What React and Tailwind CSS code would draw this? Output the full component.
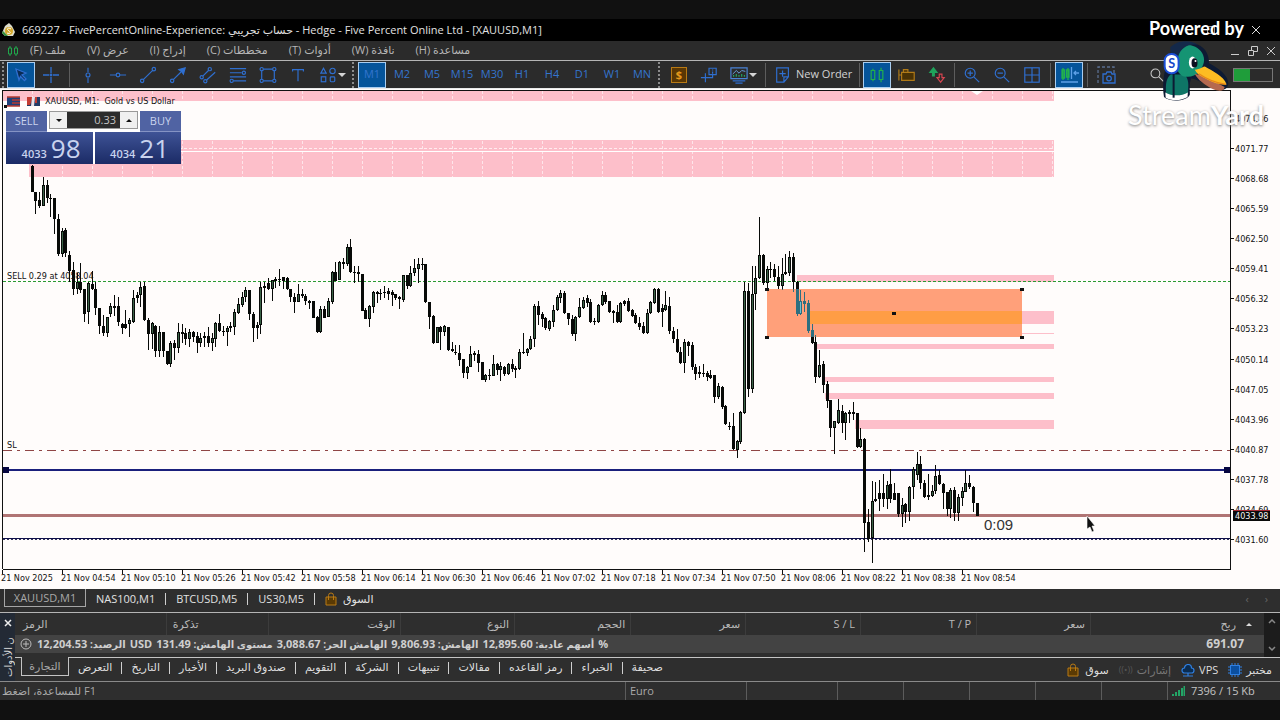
import React from "react";

// Each candle: [high, open, close, low] as vertical positions on the chart.
const CANDLES = [
  [165,166,192,192],[192,192,201,214],[192,200,206,208],[177,206,185,206],[180,185,198,203],[194,198,199,217],[198,198,219,234],[214,219,254,256],[228,254,231,257],[228,230,253,257],
  [251,255,271,282],[262,270,289,295],[273,289,282,294],[263,282,290,293],[289,289,314,322],[282,312,283,324],[271,284,289,290],[282,289,308,315],[308,308,326,334],[315,326,333,336],
  [317,333,317,337],[303,314,306,317],[295,306,308,316],[297,306,322,326],[323,324,328,334],[310,324,328,329],[318,324,320,337],[290,322,298,323],[292,298,295,303],[282,295,287,307],
  [282,286,320,321],[318,320,334,350],[322,334,323,349],[325,326,351,357],[326,351,332,357],[332,332,351,357],[351,351,364,365],[341,364,343,367],[340,343,348,360],[323,348,332,353],
  [324,332,334,343],[328,333,339,345],[329,339,332,347],[331,332,337,342],[332,336,343,353],[333,343,338,347],[332,336,338,347],[327,336,343,347],[333,343,338,351],[322,339,323,347],
  [314,323,331,332],[326,331,332,336],[326,332,328,346],[322,328,326,332],[309,327,312,335],[298,313,304,314],[292,305,297,307],[287,297,290,302],[290,290,314,320],[312,314,328,342],
  [322,328,325,339],[282,325,287,334],[282,286,288,303],[278,283,289,290],[280,289,280,301],[277,281,279,288],[269,279,280,286],[277,277,281,289],[277,278,289,290],[289,289,297,302],
  [293,297,302,313],[284,302,294,302],[289,294,296,298],[294,296,301,305],[300,301,303,309],[301,301,318,318],[316,317,332,333],[306,332,309,333],[306,309,318,318],[298,317,301,317],
  [271,302,272,304],[262,272,281,281],[261,280,262,280],[258,262,264,269],[244,264,247,266],[239,247,272,273],[266,272,273,283],[266,272,274,282],[274,274,311,311],[308,310,319,319],
  [305,319,306,327],[291,307,292,313],[291,292,294,303],[289,293,294,300],[286,292,293,298],[288,291,294,300],[290,292,295,306],[294,294,298,300],[296,297,299,309],[275,300,275,302],
  [275,275,286,289],[266,286,273,287],[259,273,268,276],[258,269,264,283],[258,264,265,270],[264,264,302,303],[302,302,317,329],[315,316,343,344],[327,343,327,343],[326,327,332,350],
  [325,332,326,336],[327,327,350,351],[342,349,351,352],[345,352,353,355],[345,353,360,366],[359,359,373,378],[366,373,367,379],[346,367,354,367],[351,353,355,361],[350,354,363,372],
  [362,362,380,380],[374,380,375,382],[369,375,376,380],[355,376,364,376],[363,364,370,375],[362,370,366,381],[366,367,374,376],[363,374,364,375],[359,364,369,372],[366,368,370,378],
  [349,369,352,370],[333,352,353,354],[348,353,349,356],[336,349,339,350],[304,339,306,347],[301,306,315,325],[312,314,319,327],[317,318,328,330],[320,329,321,331],[305,322,310,327],
  [295,310,297,311],[290,298,293,303],[291,293,313,314],[313,313,319,325],[315,319,334,336],[316,334,317,341],[298,317,307,318],[297,308,300,309],[295,298,303,307],[299,302,322,323],
  [318,321,322,325],[304,322,305,323],[291,305,295,306],[292,295,302,304],[301,301,312,313],[310,311,313,323],[305,312,322,323],[302,322,303,323],[300,304,301,306],[298,301,311,312],
  [309,310,316,317],[313,315,323,324],[317,323,327,330],[322,326,333,334],[309,333,313,334],[301,313,302,314],[288,303,289,304],[288,289,312,313],[304,308,312,327],[291,310,305,311],
  [297,306,331,334],[327,331,339,343],[329,339,352,353],[347,352,363,364],[339,363,342,373],[341,342,346,356],[342,345,367,370],[364,367,374,380],[366,372,374,378],[364,373,374,377],
  [371,373,377,381],[370,375,378,379],[375,375,397,403],[383,397,386,399],[386,387,407,409],[405,406,424,425],[422,426,427,430],[413,426,449,450],[440,450,441,458],[411,442,412,444],
  [282,413,291,414],[283,291,389,397],[266,389,294,393],[266,294,278,310],[217,278,255,279],[254,255,283,285],[266,283,269,288],[262,269,270,278],[264,269,277,281],[266,277,286,289],
  [258,286,274,290],[254,272,274,275],[251,273,257,276],[253,257,282,292],[281,282,314,316],[290,314,301,315],[292,301,304,312],[300,303,331,333],[324,330,343,344],[335,342,377,383],
  [350,377,365,378],[361,364,385,393],[381,384,401,408],[400,400,428,437],[421,428,421,454],[399,423,410,424],[405,411,423,433],[412,423,413,440],[410,412,414,423],[402,412,414,420],
  [413,413,447,448],[428,447,439,448],[438,439,523,552],[509,522,539,542],[481,538,501,563],[482,499,501,502],[480,493,499,511],[474,493,499,507],[481,499,485,509],[469,484,499,503],
  [483,493,500,500],[493,493,514,517],[498,514,505,527],[503,504,512,523],[486,512,487,521],[467,487,469,499],[452,475,464,480],[456,464,483,489],[480,483,497,498],[474,495,497,500],
  [485,496,491,497],[465,491,476,494],[470,475,484,485],[483,484,493,509],[492,492,509,516],[488,509,490,518],[487,490,513,521],[494,513,497,521],[487,498,491,506],[470,492,483,492],
  [475,483,487,489],[486,487,503,512],[503,503,516,516],
];

const PRICES = ["4074.86","4071.77","4068.68","4065.59","4062.50","4059.41","4056.32","4053.23","4050.14","4047.05","4043.96","4040.87","4037.78","4034.69","4031.60"];
const TIMES = ["21 Nov 2025","21 Nov 04:54","21 Nov 05:10","21 Nov 05:26","21 Nov 05:42","21 Nov 05:58","21 Nov 06:14","21 Nov 06:30","21 Nov 06:46","21 Nov 07:02","21 Nov 07:18","21 Nov 07:34","21 Nov 07:50","21 Nov 08:06","21 Nov 08:22","21 Nov 08:38","21 Nov 08:54"];
const ZONES = [
  [2, 91, 10], [29, 140, 37], [797, 275, 7], [810, 311, 13], [810, 333, 1],
  [817, 344, 5], [822, 377, 5], [825, 393, 6], [855, 420, 9],
];

function Candles({ wick, up }) {
  return CANDLES.map(([h, o, c, l], i) => {
    const x = Math.floor(32 + i * 3.75);
    const top = Math.min(o, c);
    const height = Math.max(1, Math.abs(c - o));
    return (
      <g key={i}>
        <rect x={x} y={h} width="1" height={Math.max(1, l - h)} fill={wick} />
        <rect x={x - 1} y={top} width="3" height={height} fill={wick} />
        {c < o && height > 3 && <rect x={x} y={top + 1} width="1" height={height - 2} fill={up} />}
      </g>
    );
  });
}

function Chart() {
  return (
    <svg viewBox="0 88 1280 501" className="block h-auto w-full bg-[#fffcfb] font-['DejaVu_Sans_Condensed','DejaVu_Sans',sans-serif]" role="img" aria-label="XAUUSD M1 candlestick chart">
      <defs>
        <clipPath id="zone"><rect x="767" y="289" width="255" height="48" /></clipPath>
        <clipPath id="bands">
          {ZONES.slice(0, 2).map(([x, y, h]) => <rect key={y} x={x} y={y} width={1054 - x} height={h} />)}
        </clipPath>
      </defs>
      <g shapeRendering="crispEdges">
        <rect x="0" y="88" width="1280" height="1" fill="#e8e8e8" />
        {ZONES.map(([x, y, h]) => <rect key={y} x={x} y={y} width={1054 - x} height={h} fill="#fdbfca" />)}
        <g clipPath="url(#bands)">
          {Array.from({ length: 35 }, (_, i) => (
            <line key={i} x1={32.5 + i * 30} x2={32.5 + i * 30} y1="91" y2="569" stroke="#fff" strokeOpacity="0.6" strokeDasharray="3 2" />
          ))}
          <line x1="29" x2="1054" y1="148.5" y2="148.5" stroke="#fff" strokeOpacity="0.7" strokeDasharray="3 2" />
          <line x1="29" x2="1054" y1="151.5" y2="151.5" stroke="#fff" />
        </g>
        <rect x="767" y="289" width="255" height="48" fill="#ffa07a" />
        <rect x="810" y="311" width="212" height="13" fill="#ff9d45" />
        <line x1="3" x2="1230" y1="281.5" y2="281.5" stroke="#2a9a32" strokeDasharray="3 2" />
        <line x1="3" x2="1230" y1="450.5" y2="450.5" stroke="#8f4545" strokeDasharray="9 5 3 5" />
        <rect x="3" y="514" width="1227" height="3" fill="#b07474" />
        <rect x="3" y="469" width="1227" height="2" fill="#1a1f7c" />
        <line x1="3" x2="1230" y1="538.5" y2="538.5" stroke="#10104a" />
        <line x1="3" x2="1230" y1="539.5" y2="539.5" stroke="#30305c" strokeDasharray="2 2" />
        <Candles wick="#080a08" up="#3a6347" />
        <g clipPath="url(#zone)"><Candles wick="#2d6f80" up="#6fc0d2" /></g>
        <rect x="3" y="467" width="6" height="6" fill="#060640" />
        <rect x="1224" y="467" width="7" height="6" fill="#060640" />
        {[[767, 289], [1022, 289], [767, 337], [1022, 337], [894, 313]].map(([x, y]) => (
          <rect key={`${x}-${y}`} x={x - 2} y={y - 1} width="4" height="3" fill="#111" />
        ))}
        <path d="M2.5 569V90.5H1230.5V569.5H2.5" fill="none" stroke="#111" />
        {PRICES.map((p, i) => <rect key={p} x="1231" y={Math.round(118 + i * 30.07)} width="3" height="1" fill="#111" />)}
        {TIMES.map((t, i) => <rect key={t} x={2 + i * 60} y="570" width="1" height="4" fill="#111" />)}
      </g>
      <path d="M971 91h12l-6 4z" fill="#fff" />
      <g fontSize="9" fill="#111">
        {PRICES.map((p, i) => <text key={p} x="1235" y={122 + i * 30.07}>{p}</text>)}
        {TIMES.map((t, i) => <text key={t} x={1 + i * 60} y="581">{t}</text>)}
        <text x="7" y="279">SELL 0.29 at 4058.04</text>
        <text x="7" y="448">SL</text>
        <text x="45" y="104">{"XAUUSD, M1:\u00a0\u00a0Gold vs US Dollar"}</text>
      </g>
      <rect x="1233" y="510" width="37" height="2" fill="#a52a35" />
      <rect x="1233" y="511" width="37" height="10" fill="#0a0a0a" />
      <text x="1235" y="519" fontSize="9" fill="#f4f4f4">4033.98</text>
      <text x="984" y="530" fontSize="15" fill="#333" className="font-['Liberation_Sans',sans-serif]">0:09</text>
      <g>
        <rect x="7" y="97" width="13" height="9" fill="#1f3f78" />
        <path d="M7 97h13M12 100h8M12 103h8M7 106h13" stroke="#b53a32" strokeWidth="1.5" />
        <rect x="27" y="97" width="13" height="9" fill="#233a66" />
        <path d="M27 97h5v3l-2 5h-3zM35 97h2v6h-2z" fill="#c43c32" />
        <path d="M32 97h3l-1 9h-3z" fill="#e7e2ea" />
        <rect x="4" y="105" width="3" height="3" fill="#111" />
      </g>
      <path d="M1087 516v13l3-2 2 5 2-1-2-5h3z" fill="#111" stroke="#fff" strokeWidth="0.6" />
    </svg>
  );
}

function TradePanel() {
  return (
    <div className="absolute left-1.5 top-[23px] w-[175px] text-[#c9d3ee]">
      <div className="flex h-[21px] bg-white">
        <button className="w-[41px] border-b border-[#8593c4] bg-[#5063a3] text-[11px] leading-5">SELL</button>
        <div className="mx-0.5 flex h-[18px] flex-1 border border-[#999] bg-[#2c2c2c]">
          <button aria-label="Decrease volume" className="flex w-[17px] items-center justify-center bg-[#f0f0f0]">
            <svg viewBox="0 0 6 3" className="h-[3px] w-1.5"><path d="M0 0h6L3 3z" fill="#111" /></svg>
          </button>
          <input aria-label="Volume" defaultValue="0.33" className="w-0 flex-1 bg-transparent pr-1 text-right text-[11px] leading-4 text-[#c4c4c4] outline-none" />
          <button aria-label="Increase volume" className="flex w-[17px] items-center justify-center bg-[#f0f0f0]">
            <svg viewBox="0 0 6 3" className="h-[3px] w-1.5"><path d="M0 3h6L3 0z" fill="#111" /></svg>
          </button>
        </div>
        <button className="w-[41px] border-b border-[#8593c4] bg-[#5063a3] text-[11px] leading-5">BUY</button>
      </div>
      <div className="grid h-8 grid-cols-2 gap-0.5 bg-white">
        <button aria-label="Sell at 4033.98" className="flex items-baseline justify-end gap-1 bg-linear-to-b from-[#3f5396] to-[#1b2b66] pr-3">
          <span className="text-[11px] font-semibold">4033</span><span className="text-[26px] leading-8">98</span>
        </button>
        <button aria-label="Buy at 4034.21" className="flex items-baseline justify-end gap-1 bg-linear-to-b from-[#3f5396] to-[#1b2b66] pr-3">
          <span className="text-[11px] font-semibold">4034</span><span className="text-[26px] leading-8">21</span>
        </button>
      </div>
    </div>
  );
}

const BLUE = "#2f6fd0";

function Icon({ children, size = "size-5", stroke = BLUE }) {
  return (
    <svg viewBox="0 0 20 20" className={`${size} shrink-0`} fill="none" stroke={stroke} strokeWidth="1.3" aria-hidden="true">
      {children}
    </svg>
  );
}

const DRAW_TOOLS = [
  ["Vertical line", <><path d="M10 2v5M10 13v6" /><circle cx="10" cy="10" r="2.2" /></>],
  ["Horizontal line", <><path d="M1 10h7M12 10h7" /><circle cx="10" cy="10" r="2" /></>],
  ["Trend line", <><path d="M4.500 15.500L15.500 4.500" /><circle cx="3.500" cy="16.500" r="1.900" /><circle cx="16.500" cy="3.500" r="1.900" /></>],
  ["Arrow line", <><path d="M4.500 15.500L15 5" /><circle cx="3.500" cy="16.500" r="1.900" /><path d="M11 4l7-2-2 7-2-3z" fill={BLUE} /></>],
  ["Channel", <><path d="M4.500 11L10.500 5M8.500 15.500L18 7" /><circle cx="3" cy="12.500" r="1.800" /><circle cx="12" cy="3.500" r="1.800" /><circle cx="7" cy="17" r="1.800" /></>],
  ["Fibonacci", <><path d="M1 3h18M1 7.500h13M1 12h18M5 16.500h14" /><circle cx="16.500" cy="7.500" r="1.800" /><circle cx="3" cy="16.500" r="1.800" /></>],
  ["Rectangle", <><path d="M3 5v10M17 5v10M5 3.500h10M5 16.500h10" /><circle cx="3" cy="3.500" r="1.800" /><circle cx="17" cy="3.500" r="1.800" /><circle cx="3" cy="16.500" r="1.800" /><circle cx="17" cy="16.500" r="1.800" /></>],
  ["Text", <path d="M4 6V4h12v2M10 4v13" />],
  ["Shapes", <><path d="M5 2.500L8 8H2z" /><circle cx="15" cy="5.500" r="3" /><rect x="2.500" y="12" width="5" height="5.500" /><rect x="12.500" y="12" width="5" height="5.500" rx="1" /></>],
];

function Tool({ label, active, children }) {
  const state = active ? "border-[#a9cdf0] bg-[#05549a]" : "border-transparent";
  return (
    <button aria-label={label} className={`flex h-[26px] w-7 shrink-0 items-center justify-center border ${state}`}>
      {children}
    </button>
  );
}

const Grip = () => <span className="mx-0.5 h-[26px] shrink-0 border-l-2 border-dotted border-[#8c8c8c]" />;
const Sep = ({ wide }) => <span className={`${wide ? "mx-1" : "mx-[3px]"} h-6 w-px shrink-0 bg-[#5d5d5d]`} />;
const Caret = () => <svg viewBox="0 0 8 4" className="-ml-1 mr-1 h-1 w-2 shrink-0" aria-hidden="true"><path d="M0 0h8L4 4z" fill="#d5d5d5" /></svg>;

function Toolbar() {
  return (
    <div className="flex h-7 items-center border-t border-[#b5b5b5] bg-[#2b2b2b]" role="toolbar">
      <Grip />
      <div className="ml-px flex items-center gap-0.5">
        <Tool label="Cursor" active><Icon><path d="M5 4l10 4-4 2 4 4-1.500 1.500-4-4L8 15z" fill="#0a2c55" /></Icon></Tool>
        <Tool label="Crosshair"><Icon><path d="M10 2v6M10 12v6M2 10h6M12 10h6" /><circle cx="10" cy="10" r="0.800" /></Icon></Tool>
      </div>
      <Sep wide />
      <div className="flex items-center gap-0.5">
        {DRAW_TOOLS.map(([label, art]) => <Tool key={label} label={label}><Icon size="size-[18px]">{art}</Icon></Tool>)}
      </div>
      <Caret />
      <Grip />
      <div className="ml-0.5 flex items-center gap-0.5 text-[11px] text-[#3475cf]">
        {["M1", "M2", "M5", "M15", "M30", "H1", "H4", "D1", "W1", "MN"].map((t) => <Tool key={t} label={t} active={t === "M1"}>{t}</Tool>)}
      </div>
      <Grip />
      <div className="ml-[3px] flex items-center gap-0.5">
        <Tool label="Symbols">
          <span className="flex size-4 items-center justify-center border border-[#b97a14] bg-[#5a3704] text-[11px] font-bold leading-none text-[#e59a1c]">$</span>
        </Tool>
        <Tool label="Data window"><Icon size="size-[18px]"><path d="M6 8v10M1 13h10M10 13h4V9M10 2.500h8v7h-8zM14 4v1M14 6v2.500" /></Icon></Tool>
        <Tool label="Indicators"><Icon size="size-[18px]"><path d="M1 2h18v12H1z" stroke="#4b83d6" /><path d="M3 9l4-4 3 3 3-3 4 1" stroke="#6fa6e8" strokeWidth="1" /><path d="M4 12v-2M7 12V9M10 12v-2M13 12V9M16 12v-2" stroke="#22a565" /><path d="M3 16.500h14M6 19h8" /></Icon></Tool>
      </div>
      <Caret />
      <Sep wide />
      <button className="flex h-[26px] w-[86px] shrink-0 items-center gap-1 pl-1 text-[11px] text-[#d2d2d2]">
        <Icon size="size-[18px]"><path d="M3 2h13v10l-5 6H3zM16 12h-5v6M9.500 5v7M6 8.500h7" /></Icon>
        <span className="whitespace-nowrap">New Order</span>
      </button>
      <Sep />
      <div className="flex items-center gap-0.5">
        <Tool label="Candlesticks" active><Icon size="size-[18px]" stroke="#22b14c"><path d="M3.500 5h4v10h-4zM12.500 5h4v10h-4zM5.500 3v2M5.500 15v2M14.500 2v3M14.500 15v3" /></Icon></Tool>
        <Tool label="Data folder"><Icon size="size-[18px]" stroke="#b07a18"><path d="M4 7h14v9H4zM6 7V4h5v3M1 4v12M1 10h3" fill="#4a3204" /></Icon></Tool>
        <Tool label="Auto trading"><Icon size="size-[18px]"><path d="M6 2L2 7h3v4h2V7h3z" stroke="#1fa35b" fill="#1fa35b" /><path d="M14 18l-4-5h2.500V9h3v4H18z" stroke="#d64550" /></Icon></Tool>
      </div>
      <Sep />
      <div className="flex items-center gap-0.5">
        <Tool label="Zoom in"><Icon size="size-[18px]"><circle cx="8" cy="8" r="5.500" /><path d="M12 12l6 6M8 5v6M5 8h6" /></Icon></Tool>
        <Tool label="Zoom out"><Icon size="size-[18px]"><circle cx="8" cy="8" r="5.500" /><path d="M12 12l6 6M5 8h6" /></Icon></Tool>
        <Tool label="Tile windows"><Icon size="size-[18px]"><rect x="2" y="2" width="16" height="16" /><path d="M10 2v16M2 10h16" /></Icon></Tool>
      </div>
      <Sep wide />
      <Tool label="Auto scroll" active><Icon><path d="M3 5h2.500v8H3zM7.500 5H10v7H7.500zM4 3v12M9 3v12" stroke="#22b14c" /><path d="M12.500 2v12M20 8h-5M17 6l-2 2 2 2M2 17h17" stroke="#5da0e8" /></Icon></Tool>
      <Sep wide />
      <Tool label="Screenshot"><Icon><path d="M2 18V2h16v6" strokeDasharray="3 2" stroke="#5b6f90" /><path d="M7 9h3l1-2h4l1 2h3v9H7z" /><circle cx="13" cy="13.500" r="2.300" /></Icon></Tool>
      <div className="ml-auto flex items-center pr-[7px]">
        <button aria-label="Search" className="mr-[46px]"><Icon size="size-4" stroke="#c8c8c8"><circle cx="8" cy="8" r="5.500" /><path d="M12 12l6 6" /></Icon></button>
        <Icon size="size-3" stroke="#1fa35b"><path d="M10 18V4M4 9l6-6 6 6" /></Icon>
        <span className="ml-2.5 flex h-3.5 w-10 border border-[#777] bg-[#2b2b2b]"><span className="w-4 bg-[#1f9d3a]" /></span>
      </div>
    </div>
  );
}

function StreamBadge() {
  return (
    <div className="absolute right-2.5 top-4 w-[142px] text-white">
      <p className="pl-[21px] font-['Lato',sans-serif] text-[18px] font-bold leading-6">Powered by</p>
      <svg viewBox="660 90 220 190" className="ml-[31px] h-[63px] w-[73px]" role="img" aria-label="Duck mascot">
        <path d="M675 262c-6-40 0-70 6-90 4-50 40-78 82-72 32 5 48 30 48 60 30 16 58 36 58 62-4 24-26 20-44 12-30-12-52-28-68-28-6 14-4 28-4 48-8 22-62 24-78 8z" fill="#0d1a33" />
        <path d="M681 250c-2-30 2-46 14-56h40c16 10 14 34 12 56-20 10-46 12-66 0z" fill="#0e7566" />
        <path d="M706 115c24-18 68-14 84 14 10 18 8 36-10 56-12 16-30 18-48 14-22-10-34-60-26-84z" fill="#159473" />
        <path d="M694 112c20-22 60-24 84-8-30-4-54 10-60 36l-22 4z" fill="#14294a" />
        <path d="M679 248c20 12 48 12 68 0l-1 14c-18 12-50 12-66 2z" fill="#fff" />
        <path d="M704 190v74" stroke="#0d1a33" strokeWidth="6" />
        <ellipse cx="761" cy="158" rx="11" ry="18" fill="#fff" />
        <ellipse cx="767" cy="159" rx="9" ry="14" fill="#0b1020" />
        <circle cx="770" cy="153" r="3" fill="#fff" />
        <path d="M768 192c28 6 56 22 90 40-4 16-20 12-36 6-24-12-46-28-54-46z" fill="#b5694f" />
        <path d="M768 180c16-2 20-8 30-10 24 14 56 28 66 54-20 2-42-6-60-16-14-6-28-12-36-28z" fill="#fdbc22" />
        <path d="M780 192c26 18 52 28 82 32" fill="none" stroke="#e8871a" strokeWidth="4" />
        <rect x="677" y="132" width="42" height="58" rx="20" fill="#fff" stroke="#1c4fd8" strokeWidth="6" />
        <text x="698" y="174" textAnchor="middle" fontSize="38" fontWeight="700" fill="#1746c9" className="font-['Lato',sans-serif]">S</text>
      </svg>
      <p className="-mt-1 font-['Lato',sans-serif] text-[27px] leading-8 [text-shadow:0_1px_3px_#777]">Stream<b>Yard</b></p>
    </div>
  );
}

const MENUS = ["ملف (F)", "عرض (V)", "إدراج (I)", "مخططات (C)", "أدوات (T)", "نافذة (W)", "مساعدة (H)"];
const TOOLBOX_TABS = ["التعرض", "التاريخ", "الأخبار", "صندوق البريد", "التقويم", "الشركة", "تنبيهات", "مقالات", "رمز القاعده", "الخبراء", "صحيفة"];
const BALANCE = [["الرصيد:", "12,204.53"], ["", "USD"], ["مستوى الهامش:", "131.49"], ["الهامش الحر:", "3,088.67"], ["الهامش:", "9,806.93"], ["أسهم عادية:", "12,895.60"], ["", "%"]];
const CELL = "border-r border-[#3c3c3c] font-normal";

function Bag() {
  return (
    <svg viewBox="0 0 12 14" className="h-3.5 w-3 shrink-0" aria-hidden="true">
      <path d="M1 5h10v8H1z" fill="#5a3a04" stroke="#b97a14" />
      <path d="M3.500 8V3.500a2.500 2.500 0 015 0V8" fill="none" stroke="#b97a14" />
    </svg>
  );
}

function Toolbox() {
  return (
    <section className="flex border-t border-[#b5b5b5] bg-[#2e2e2e]">
      <div className="flex w-[15px] shrink-0 flex-col items-center overflow-hidden bg-[#232a35] text-[#d8d8d8]">
        <button aria-label="Close toolbox" className="flex h-5 items-center">
          <svg viewBox="0 0 8 8" className="size-2"><path d="M1 1l6 6M7 1L1 7" stroke="#eee" strokeWidth="1.500" /></svg>
        </button>
        <span className="h-11 rotate-180 overflow-hidden whitespace-nowrap text-[10px] leading-[14px] [writing-mode:vertical-rl]">ن الأدوات</span>
      </div>
      <div className="min-w-0 flex-1">
        <div className="flex h-11">
          <div className="min-w-0 flex-1">
            <table className="w-full table-fixed border-collapse text-[11px] text-[#b9b9b9]">
              <colgroup>
                <col className="w-[12.100%]" /><col className="w-[8.200%]" /><col className="w-[10.600%]" /><col className="w-[9.100%]" /><col className="w-[9.300%]" />
                <col className="w-[9.200%]" /><col className="w-[9.200%]" /><col className="w-[9.300%]" /><col className="w-[9.100%]" /><col />
              </colgroup>
              <thead>
                <tr className="h-[22px]">
                  <th className={`${CELL} pl-2 text-left`}>الرمز</th>
                  <th className={`${CELL} pl-1.5 text-left`}>تذكرة</th>
                  {["الوقت", "النوع", "الحجم", "سعر", "S / L", "T / P", "سعر"].map((h, i) => <th key={i} className={`${CELL} pr-[5px] text-right`}>{h}</th>)}
                  <th className="pr-3 font-normal"><span className="flex items-center justify-end gap-2.5">ربح<svg viewBox="0 0 6 3" className="h-[3px] w-1.5"><path d="M0 3h6L3 0z" fill="#ddd" /></svg></span></th>
                </tr>
              </thead>
              <tbody>
                <tr className="h-[18px] bg-[#434343] font-bold leading-[18px] text-[#cfcfcf]">
                  <td colSpan={9} className="pl-[5px]">
                    <div className="flex items-center gap-1 whitespace-nowrap">
                      <svg viewBox="0 0 12 12" className="mr-px size-3" fill="none" stroke="#bbb"><circle cx="6" cy="6" r="5" /><path d="M6 3v6M3 6h6" /></svg>
                      {BALANCE.map(([label, value]) => (
                        <span key={value} dir={label ? "rtl" : "ltr"}>{label && <span className="text-[10px]">{label} </span>}{value}</span>
                      ))}
                    </div>
                  </td>
                  <td className="pr-5 text-right text-[12px]">691.07</td>
                </tr>
              </tbody>
            </table>
          </div>
          <div className="flex w-4 shrink-0 flex-col items-center justify-between bg-[#1c1c1c] py-1.5">
            <svg viewBox="0 0 8 5" className="h-[5px] w-2" fill="none" stroke="#888" strokeWidth="1.500"><path d="M1 4l3-3 3 3" /></svg>
            <svg viewBox="0 0 8 5" className="h-[5px] w-2" fill="none" stroke="#888" strokeWidth="1.500"><path d="M1 1l3 3 3-3" /></svg>
          </div>
        </div>
        <div className="flex h-6 items-start whitespace-nowrap border-t border-[#c4c4c4] pl-1.5 text-[11px] text-[#dedede]">
          <button className="-mt-px h-[19px] w-12 border border-t-0 border-[#c4c4c4] bg-[#2e2e2e] leading-[18px] text-[#a9a9a9]">التجارة</button>
          {TOOLBOX_TABS.map((t, i) => (
            <React.Fragment key={t}>
              {i > 0 && <span className="mt-1 h-3 w-px bg-[#cfcfcf]" />}
              <button className="px-[9px] leading-[18px]">{t}</button>
            </React.Fragment>
          ))}
          <div className="ml-auto flex items-center gap-2.5 pr-2 leading-6">
            <a href="#market" className="flex items-center gap-1.5"><Bag />سوق</a>
            <a href="#signals" className="flex items-center gap-1 text-[#777]"><span className="text-[9px] text-[#555]">((•))</span>إشارات</a>
            <a href="#vps" className="flex items-center gap-1">
              <svg viewBox="0 0 14 13" className="h-[13px] w-3.5" fill="#0b2c50" stroke="#2f7fe0" strokeWidth="1.200"><path d="M3.500 9a2.500 2.500 0 010-5 3.500 3.500 0 017 0 2.500 2.500 0 010 5zM7 9v3M2 12h10" /></svg>VPS
            </a>
            <a href="#tester" className="flex items-center gap-1">
              <svg viewBox="0 0 14 14" className="size-3.5" stroke="#2f7fe0"><path d="M4 0v14M7 0v14M10 0v14M0 4h14M0 7h14M0 10h14" /><rect x="2.500" y="2.500" width="9" height="9" fill="#0b4fa0" /></svg>مختبر
            </a>
          </div>
        </div>
      </div>
    </section>
  );
}

export default function App() {
  return (
    <div className="relative min-h-screen bg-[#111] pt-[19px] font-['Open_Sans','DejaVu_Sans',sans-serif]">
      <header>
        <div className="flex h-[22px] items-center bg-black pl-0.5 text-[11px] text-[#e2e2e2]">
          <svg viewBox="0 0 14 14" className="mr-1.5 size-3.5" aria-hidden="true">
            <path d="M7 0l3 3 3 6-2 4H3L0 10l3-7z" fill="#dcdccb" /><circle cx="7" cy="8" r="4" fill="#d5a92b" /><path d="M0 10l3 3h3L1 8z" fill="#37903f" />
            <path d="M9 6c-3-2-5 0-2 2s0 3-2 2" fill="none" stroke="#fff" />
          </svg>
          <h1 className="whitespace-nowrap">669227 - FivePercentOnline-Experience: حساب تجريبي - Hedge - Five Percent Online Ltd - [XAUUSD,M1]</h1>
          <button aria-label="Restore" className="ml-auto size-2 border border-[#999]" />
          <button aria-label="Close" className="ml-9 mr-[19px]"><svg viewBox="0 0 10 10" className="size-2.5"><path d="M1 1l8 8M9 1L1 9" stroke="#ddd" /></svg></button>
        </div>
        <nav className="flex h-[19px] items-center gap-[21px] bg-[#2b2b2b] pl-[7px] text-[11px] text-[#b6b6b6]">
          <svg viewBox="0 0 12 12" className="-mr-2.5 size-3" fill="none" stroke="#20a84c" aria-hidden="true"><path d="M1.500 3h3v6h-3zM7.500 3h3v6h-3zM3 1v2M3 9v2M9 1v2M9 9v2" /></svg>
          {MENUS.map((m) => <button key={m} dir="rtl" className="whitespace-nowrap">{m}</button>)}
          <div className="ml-auto flex items-center gap-2 pr-1">
            <button aria-label="Minimize"><svg viewBox="0 0 10 10" className="size-2.5"><path d="M1 8.500h8" stroke="#ccc" /></svg></button>
            <button aria-label="Restore chart"><svg viewBox="0 0 10 10" className="size-2.5" fill="none" stroke="#ccc"><path d="M.5 4.500h5v5h-5zM3.500 4V.5h6v5H6" /></svg></button>
            <button aria-label="Close chart"><svg viewBox="0 0 10 10" className="size-2.5"><path d="M1 1l8 8M9 1L1 9" stroke="#ccc" /></svg></button>
          </div>
        </nav>
        <Toolbar />
      </header>
      <main className="relative">
        <Chart />
        <TradePanel />
      </main>
      <div className="flex h-[23px] items-start whitespace-nowrap bg-[#2e2e2e] pl-1 text-[11px] text-[#e2e2e2]">
        <button className="h-[18px] w-[82px] border border-t-0 border-[#a5a5a5] leading-[17px] text-[#a9a9a9]">XAUUSD,M1</button>
        {["NAS100,M1", "BTCUSD,M5", "US30,M5"].map((t) => (
          <React.Fragment key={t}>
            <button className="px-2.5 leading-5">{t}</button>
            <span className="mt-1 h-3 w-px bg-[#cfcfcf]" />
          </React.Fragment>
        ))}
        <button className="flex items-center gap-1.5 pl-2.5 leading-5"><Bag />السوق</button>
        <span className="ml-auto flex gap-4 pr-3 leading-5 text-[#666]"><span>‹</span><span>›</span></span>
      </div>
      <Toolbox />
      <footer className="flex h-[19px] items-center border-t border-[#8a8a8a] bg-[#2e2e2e] text-[11px] text-[#a9a9a9]">
        <span className="flex-1 pl-0.5">للمساعدة، اضغط F1</span>
        <span className="h-full w-[121px] border-l border-[#5c5c5c] pl-1 leading-[18px]">Euro</span>
        <span className="h-full w-[91px] border-l border-[#5c5c5c]" />
        {[0, 1, 2, 3, 4].map((i) => <span key={i} className="h-full w-[66px] border-l border-[#5c5c5c]" />)}
        <span className="flex h-full w-[113px] items-center gap-1.5 border-l border-[#5c5c5c] pl-1 text-[#c4c4c4]">
          <svg viewBox="0 0 13 10" className="h-2.5 w-[13px]" stroke="#23a566" strokeWidth="2"><path d="M1 10V8M4 10V6M7 10V4M10 10V2M12.500 10V0" /></svg>7396 / 15 Kb
        </span>
      </footer>
      <StreamBadge />
    </div>
  );
}
